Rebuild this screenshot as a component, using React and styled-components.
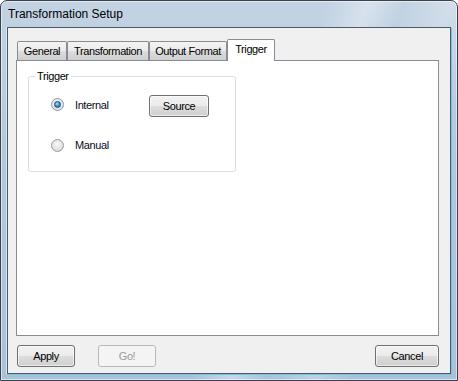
import React from "react";
import styled, { createGlobalStyle } from "styled-components";

const GlobalStyle = createGlobalStyle`
  html, body {
    margin: 0;
    padding: 0;
    background: #ffffff;
  }
  body {
    font-family: "Liberation Sans", Arial, sans-serif;
    font-size: 11px;
    letter-spacing: -0.4px;
    color: #000;
  }
`;

const Window = styled.div`
  width: 458px;
  height: 381px;
  box-sizing: border-box;
  display: flex;
  flex-direction: column;
  padding: 0 6px 6px;
  border: 1px solid #39414d;
  border-radius: 7px 7px 0 0;
  background:
    linear-gradient(110deg, rgba(255,255,255,0) 55%, rgba(255,255,255,0.35) 62%, rgba(255,255,255,0) 68%, rgba(255,255,255,0.25) 76%, rgba(255,255,255,0) 82%),
    linear-gradient(180deg, #c3d3e3 0%, #b4c8dc 40%, #aac1d8 100%);
  box-shadow: inset 0 0 0 1px rgba(255, 255, 255, 0.55);
`;

const TitleBar = styled.div`
  height: 26px;
  display: flex;
  align-items: center;
  padding-left: 1px;
  padding-bottom: 1px;
  box-sizing: border-box;
  font-family: "Liberation Sans", Arial, sans-serif;
  font-size: 12px;
  letter-spacing: 0;
  color: #000;
`;

const Client = styled.div`
  flex: 1;
  display: flex;
  flex-direction: column;
  background: #f0f0f0;
  border: 1px solid #4f5965;
  box-shadow: 1px 1px 0 #6fc6ea, -1px 0 0 #d8e6f2;
  padding: 11px 11px 6px 8px;
`;

const TabStrip = styled.div`
  display: flex;
  align-items: flex-end;
  height: 21px;
  padding-left: 1px;
  position: relative;
  z-index: 1;
`;

const Tab = styled.div`
  width: ${(p) => p.$w}px;
  box-sizing: border-box;
  height: ${(p) => (p.$active ? 22 : 19)}px;
  margin-bottom: ${(p) => (p.$active ? -1 : 0)}px;
  display: flex;
  align-items: center;
  justify-content: center;
  padding-bottom: ${(p) => (p.$active ? 3 : 0)}px;
  border: 1px solid #898c95;
  border-bottom: none;
  border-radius: 2px 2px 0 0;
  background: ${(p) =>
    p.$active
      ? "#ffffff"
      : "linear-gradient(180deg, #f3f3f3 0%, #ebebeb 50%, #dddddd 51%, #cfcfcf 100%)"};
`;

const Panel = styled.div`
  height: 276px;
  box-sizing: border-box;
  border: 1px solid #898c95;
  background: #ffffff;
  padding: 9px 0 0 11px;
`;

const Group = styled.fieldset`
  width: 208px;
  height: 102px;
  box-sizing: border-box;
  margin: 0;
  padding: 0;
  border: 1px solid #d5dfe5;
  border-radius: 3px;
  display: flex;
  flex-direction: column;
`;

const Legend = styled.legend`
  margin-left: 6px;
  padding: 0 2px;
  line-height: 13px;
`;

const OptionRow = styled.div`
  display: flex;
  align-items: center;
  height: 22px;
  padding-left: 22px;
  margin-top: ${(p) => p.$top}px;
`;

const Option = styled.label`
  display: flex;
  align-items: center;
  width: 98px;
  margin-bottom: ${(p) => p.$lift}px;
  color: #0a0a24;
`;

const Radio = styled.span`
  position: relative;
  width: 13px;
  height: 13px;
  box-sizing: border-box;
  margin-right: 11px;
  border-radius: 50%;
  border: 1px solid #939aa2;
  background: radial-gradient(circle at 45% 40%, #f6f6f6 0%, #e4e4e4 55%, #cfd2d4 100%);
  &::after {
    content: "";
    display: ${(p) => (p.$checked ? "block" : "none")};
    position: absolute;
    left: 2px;
    top: 2px;
    width: 7px;
    height: 7px;
    box-sizing: border-box;
    border-radius: 50%;
    border: 1px solid #1b4f7d;
    background: radial-gradient(circle at 40% 35%, #b9e4fb 0%, #3b9ad4 45%, #0f5c99 100%);
  }
`;

const Button = styled.button`
  width: ${(p) => p.$w}px;
  height: 22px;
  box-sizing: border-box;
  padding: 0;
  margin: 0;
  font-family: "Liberation Sans", Arial, sans-serif;
  font-size: 11px;
  letter-spacing: -0.4px;
  color: ${(p) => (p.disabled ? "#9a9a9a" : "#000")};
  border: 1px solid ${(p) => (p.disabled ? "#b5b9bc" : "#707070")};
  border-radius: 3px;
  background: ${(p) =>
    p.disabled
      ? "#f4f4f4"
      : "linear-gradient(180deg, #f2f2f2 0%, #ebebeb 50%, #dddddd 51%, #cfcfcf 100%)"};
  box-shadow: inset 0 0 0 1px ${(p) => (p.disabled ? "#f4f4f4" : "rgba(255,255,255,0.6)")};
`;

const ButtonRow = styled.div`
  display: flex;
  align-items: center;
  margin-top: 9px;
  padding-left: 1px;
  gap: 23px;
  & > :last-child {
    margin-left: auto;
  }
`;

const tabs = [
  { label: "General", w: 50 },
  { label: "Transformation", w: 82 },
  { label: "Output Format", w: 78 },
  { label: "Trigger", w: 48, active: true },
];

export default function App() {
  return (
    <>
      <GlobalStyle />
      <Window>
        <TitleBar>Transformation Setup</TitleBar>
        <Client>
          <TabStrip>
            {tabs.map((t) => (
              <Tab key={t.label} $w={t.w} $active={t.active}>
                {t.label}
              </Tab>
            ))}
          </TabStrip>
          <Panel>
            <Group>
              <Legend>Trigger</Legend>
              <OptionRow $top={12}>
                <Option $lift={3}>
                  <Radio $checked />
                  Internal
                </Option>
                <Button $w={60}>Source</Button>
              </OptionRow>
              <OptionRow $top={17}>
                <Option $lift={0}>
                  <Radio />
                  Manual
                </Option>
              </OptionRow>
            </Group>
          </Panel>
          <ButtonRow>
            <Button $w={58}>Apply</Button>
            <Button $w={58} disabled>
              Go!
            </Button>
            <Button $w={64}>Cancel</Button>
          </ButtonRow>
        </Client>
      </Window>
    </>
  );
}
